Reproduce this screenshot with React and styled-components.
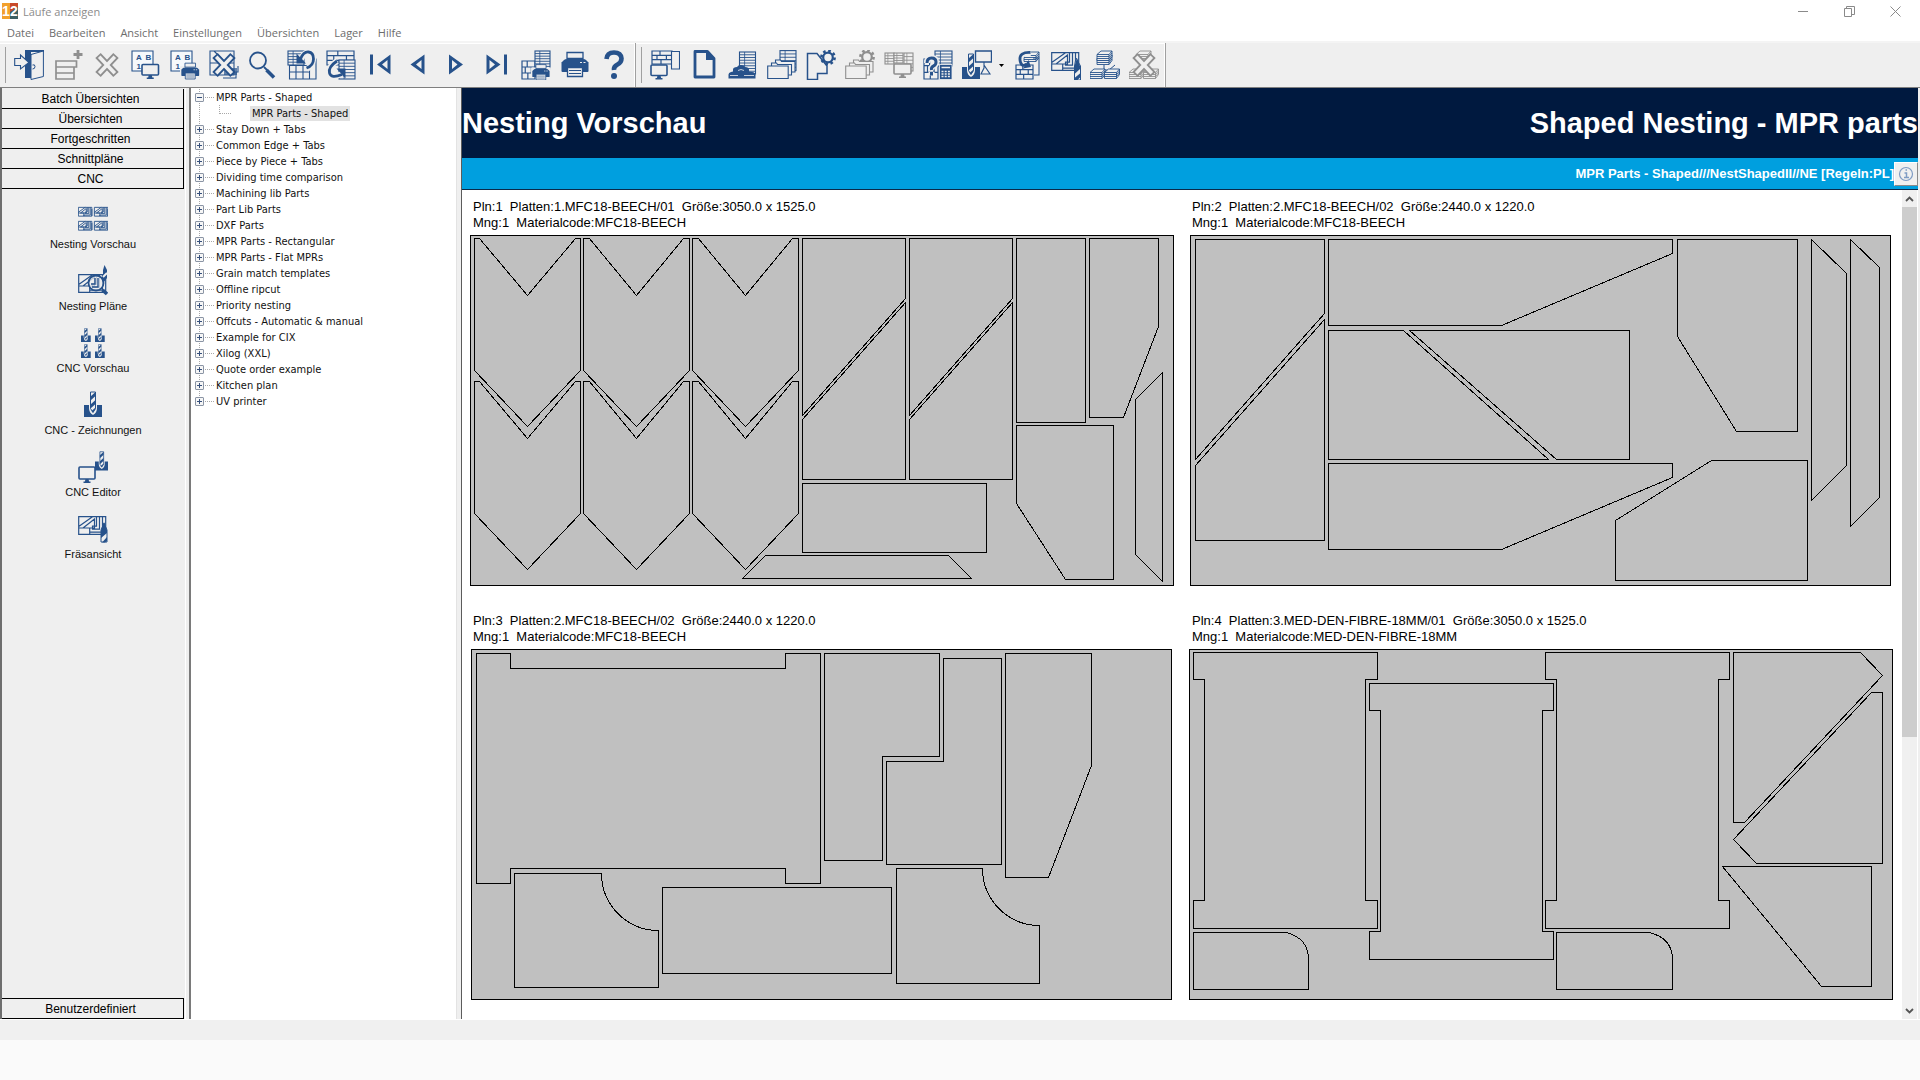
import React, { useState } from "react";
import styled, { createGlobalStyle, css } from "styled-components";

const BLUE = "#27528b";
const GREY = "#8f8f8f";
const FACE = "#efefef";
const SANS = '"Liberation Sans", Arial, sans-serif';
const UI = '"Open Sans", "Segoe UI", sans-serif';

const GlobalStyle = createGlobalStyle`
  *, *::before, *::after { box-sizing: border-box; }
  body { margin: 0; background: #fafafa; font-family: ${SANS}; color: #000; }
  button { font: inherit; color: inherit; border: 0; padding: 0; background: none; }
  ul { list-style: none; margin: 0; padding: 0; }
  h1, h2, p { margin: 0; font: inherit; }
`;

/* ---------- icon building blocks ---------- */

const Monitor = ({ x, y, w, h }) => (
  <g>
    <rect x={x} y={y} width={w} height={h} rx="1" fill={FACE} stroke="currentColor" strokeWidth="1.6" />
    <path d={`M${x + w / 2 - 1.5} ${y + h}h3l.6 2.5h1.4v1.4h-7v-1.4h1.4z`} fill="currentColor" />
  </g>
);

const Printer = ({ x, y, s = 1 }) => (
  <g transform={`translate(${x} ${y}) scale(${s})`}>
    <rect x="-1.5" y="7" width="31" height="14" fill={FACE} />
    <path d="M6 2.5h16v6H6z" fill={FACE} stroke="currentColor" strokeWidth="1.3" />
    <path d="M3 10q1-1 3-1h16q2 0 3 1l2.5 2.500v8.500q0 1-1 1h-25q-1 0-1-1v-8.500z" fill="currentColor" />
    <path d="M19 12.500h2m1.500 0h2" stroke={FACE} strokeWidth="1.2" />
    <path d="M6.500 17.500h15v9h-15z" fill={FACE} stroke="currentColor" strokeWidth="1.3" />
    <path d="M8 20.500h12M8 23.500h12" stroke="currentColor" strokeWidth="1" />
  </g>
);

const Drill = ({ x, y, s = 1 }) => (
  <g transform={`translate(${x} ${y}) scale(${s})`}>
    <path d="M0 14h5v3q0 5 4 7q4-2 4-7v-3h5v12H0z" fill="currentColor" />
    <path d="M6.500 1h5v16.500l-2.500 4l-2.500-4z" fill={FACE} stroke="currentColor" strokeWidth="1" />
    <path d="M6.500 5.500L11.500 1v4L6.500 9.500zM6.500 13.500l5-4.500v4l-5 4.500zM7.500 20l4-3.500v1.500l-2.500 3.500z" fill="currentColor" />
  </g>
);

const Nest = ({ x, y, s = 1, sw = 1.2 }) => (
  <g transform={`translate(${x} ${y}) scale(${s})`} fill="none" stroke="currentColor" strokeWidth={sw / s}>
    <path d="M.7 .7h27v17.600H.7zM.7 12h11M.7 10.500L14.500 .7M5 12L16.500 3v9zM18.500 .7v9.500h-4v3h7V.7M24.500 .7v15.500H11.700v2M27.700 4v14M11.700 12v6" />
  </g>
);

const AbSheet = () => (
  <g>
    <path d="M1 1h21v20H1z" fill="#f5f8fb" stroke="currentColor" strokeWidth="1.1" />
    <g fill="currentColor" fontFamily={SANS} fontWeight="700" fontSize="8">
      <text x="5" y="9.500">A</text>
      <text x="14.500" y="9.500">B</text>
      <text x="5.500" y="19">1</text>
    </g>
  </g>
);

const Cross = () => (
  <g fill="none" strokeLinejoin="miter">
    <path d="M6 5.500l18 19M24 5.500l-18 19" stroke="currentColor" strokeWidth="7.500" />
    <path d="M7.200 6.800l15.600 16.400M22.800 6.800l-15.600 16.400" stroke={FACE} strokeWidth="3.600" />
  </g>
);

const Page = ({ x, y, w, h, lines = 3 }) => (
  <g>
    <rect x={x} y={y} width={w} height={h} fill={FACE} stroke="currentColor" strokeWidth="1.1" />
    {Array.from({ length: lines }, (_, i) => (
      <path key={i} d={`M${x} ${y + ((i + 1) * h) / (lines + 1)}h${w}`} stroke="currentColor" strokeWidth=".9" />
    ))}
    <path d={`M${x + w * 0.32} ${y}v${h}`} stroke="currentColor" strokeWidth=".8" />
  </g>
);

const Bricks = ({ x, y, w, h }) => (
  <g transform={`translate(${x} ${y})`} fill="none" stroke="currentColor" strokeWidth="1.2">
    <path d={`M0 0h${w}v${h}H0zM0 ${h / 3}h${w}M0 ${(h * 2) / 3}h${w}M${w * 0.4} 0v${h / 3}M${w * 0.72} ${h / 3}v${h / 3}M${w * 0.25} ${h / 3}v${h / 3}M${w * 0.45} ${(h * 2) / 3}v${h / 3}`} />
  </g>
);

const Gear = ({ x, y }) => (
  <g transform={`translate(${x} ${y})`} fill="none" stroke="currentColor">
    <circle r="6.600" strokeWidth="2.600" strokeDasharray="2.600 2.580" />
    <circle r="4.800" strokeWidth="2.200" fill={FACE} />
  </g>
);

const Stack = ({ x, y }) => (
  <g transform={`translate(${x} ${y})`} fill={FACE} stroke="currentColor" strokeWidth=".9">
    <path d="M0 4.500L4 1h11v5.500L12 10.500H0z" />
    <path d="M0 4.500h12v6M12 4.500L15 1M0 6.500h12l3-3.500M0 8.500h12l3-3.500" fill="none" />
  </g>
);

const Cards = () => (
  <g fill={FACE} stroke="currentColor" strokeWidth="1.100">
    <path d="M8.500 10h5l1 1.500h13.500v10.500H8.500z" />
    <path d="M4.500 13h5l1 1.500h14v10.500h-20z" />
    <path d="M.700 16h20.500v12.500H.700z" />
  </g>
);

const icons = {
  exit: (
    <g>
      <path d="M11 0h19v2H17v26h-6z" fill="currentColor" />
      <path d="M17 4.500L29.400 1v25.500L17 29.500z" fill={FACE} stroke="currentColor" strokeWidth="1" />
      <path d="M18.500 15q2.500-1 2.500 1.500t-2.500 2.500" fill="none" stroke="currentColor" strokeWidth="1" />
      <path d="M.7 8.500h5.800V5l8.500 7.500L6.500 19v-3.500H.7z" fill={FACE} stroke="currentColor" strokeWidth="1.100" />
    </g>
  ),
  add: (
    <g fill="none" stroke="currentColor">
      <path d="M3 11h20.500v6H3zM3 17h18v6H3zM3 23h18v6H3z" strokeWidth="1.700" />
      <path d="M25 0v9M20.500 4.500h9" strokeWidth="2.800" />
    </g>
  ),
  cross: <Cross />,
  abMonitor: (<g><AbSheet /><Monitor x={11} y={14.500} w={16.500} h={10.500} /></g>),
  abPrinter: (<g><AbSheet /><Printer x={11} y={11.500} s={0.66} /></g>),
  crossDoc: (
    <g>
      <path d="M1 1h24v24H1zM14 28h13v-6h2v-6M5 1l20 20M1 13h24" fill="none" stroke="currentColor" strokeWidth="1.100" />
      <path d="M15 18h13v7H15z" fill="currentColor" opacity=".7" />
      <Cross />
    </g>
  ),
  search: (
    <g fill="none" stroke="currentColor">
      <circle cx="10" cy="10.500" r="8" strokeWidth="1.800" />
      <path d="M16 17l3 3" strokeWidth="1.800" />
      <path d="M18.500 20l7.500 7.500" strokeWidth="3.600" />
    </g>
  ),
  undoPlan: (
    <g fill="none" stroke="currentColor">
      <Page x={1} y={1} w={16} h={14} lines={4} />
      <path d="M2.500 15.500h20v13.500h-20zM2.500 22h20M9 15.500v13.500M16 15.500v13.500M23 9h6v20h-6" strokeWidth="1.100" />
      <path d="M14 9q3-7 8-6t4 7t-6 9" stroke={FACE} strokeWidth="6" />
      <path d="M13.500 9q3-7.500 8-7t5 7t-7 9" strokeWidth="2.800" />
      <path d="M9.500 3.500v10h9.500z" fill="currentColor" stroke="none" />
    </g>
  ),
  redoPlan: (
    <g fill="none" stroke="currentColor">
      <Bricks x={1} y={1} w={27} h={14} />
      <Page x={13} y={10} w={16} h={19} lines={5} />
      <path d="M11 11q-9 6-8 12t13 1" stroke={FACE} strokeWidth="6" />
      <path d="M11 11q-9 6-7.500 12t12.500 1.500" strokeWidth="2.800" />
      <path d="M10.500 18.500h9v10z" fill="currentColor" stroke="none" />
    </g>
  ),
  first: (<g fill="currentColor"><path d="M5 4.500h3v20H5z" /><path d="M25.500 4.500v20L12 14.500zM22.500 10l-5.500 4.500 5.500 4.500z" fillRule="evenodd" /></g>),
  prev: <path d="M20.500 4.500v20L6.500 14.500zM17.500 10l-5.500 4.500 5.500 4.500z" fill="currentColor" fillRule="evenodd" />,
  next: <path d="M6 4.500v20l14-10zM9 10l5.500 4.500L9 19z" fill="currentColor" fillRule="evenodd" />,
  last: (<g fill="currentColor"><path d="M22 4.500h3v20h-3z" /><path d="M4.500 4.500v20l14-10zM7.500 10l5.500 4.500L7.500 19z" fillRule="evenodd" /></g>),
  planPrinter: (
    <g><Bricks x={1} y={11} w={13} h={18} /><Page x={14} y={1} w={15} h={18} lines={6} /><Printer x={11} y={13} s={0.64} /></g>
  ),
  printer: <Printer x={1} y={0} />,
  help: (
    <g>
      <path d="M7.500 9q.500-6.500 7.500-6.500t7.500 6q0 4-4 6t-3.500 5.500" fill="none" stroke="currentColor" strokeWidth="4.600" />
      <circle cx="15" cy="26" r="3" fill="currentColor" />
    </g>
  ),
  bricksMonitor: (
    <g><Bricks x={2} y={1} w={20} h={13} /><path d="M21.500 1.500h8V19h-8z" fill={FACE} stroke="currentColor" strokeWidth="1.100" /><Monitor x={1} y={15} w={16} h={10.500} /></g>
  ),
  newPage: (
    <g>
      <path d="M6 1.500h12.500l6.500 7V27H6z" fill={FACE} stroke="currentColor" strokeWidth="2.800" strokeLinejoin="round" />
      <path d="M17 1l9 9h-9z" fill="currentColor" />
    </g>
  ),
  pressPage: (
    <g>
      <Page x={11.500} y={2} w={16} h={22} lines={7} />
      <path d="M.5 28.500v-4q0-2 2.500-2.500l2-.5v-2q0-2.500 4-2.500q1-2 4-2t4 2q4 0 4 2.500v2l3 .5q3.500 .5 3.500 2.500v4z" fill="currentColor" />
      <path d="M10 20.500q3-2 6 0M2 25.500h8m6 0h10" stroke={FACE} strokeWidth=".8" fill="none" />
    </g>
  ),
  cards: (<g><Page x={13} y={.6} w={16} h={20} lines={5} /><Cards /></g>),
  shapeGear: (
    <g>
      <path d="M1.500 3.500h9.500l10 12.500v7.500h-9.500v6h-10z" fill={FACE} stroke="currentColor" strokeWidth="1.500" />
      <Gear x={22} y={7.500} />
    </g>
  ),
  cardsGear: (<g><Gear x={22} y={7} /><Cards /></g>),
  screens: (
    <g><Page x={1} y={3} w={9} h={11} lines={3} /><Page x={20} y={3} w={9} h={18} lines={4} /><Page x={10} y={3} w={9} h={10} lines={3} /><Monitor x={10} y={14} w={17} h={10} /></g>
  ),
  calc: (
    <g>
      <Bricks x={1} y={9} w={14} h={20} />
      <Page x={12} y={1} w={17} h={15} lines={4} />
      <path d="M4 13q0-5 4.500-5t4.500 4q0 3-2.500 4T8.500 20M8.500 22v3.500" fill="none" stroke={FACE} strokeWidth="6" />
      <path d="M4 13q0-5 4.500-5t4.500 4q0 3-2.500 4T8.500 20M8.500 22v3.500" fill="none" stroke="currentColor" strokeWidth="3" />
      <path d="M16.500 14.500H29V29.500H16.500z" fill="currentColor" stroke={FACE} strokeWidth=".8" />
      <path d="M18.500 17.500h8.500M18.500 21.500h2m1.200 0h2m1.200 0h2M18.500 24h2m1.200 0h2m1.200 0h2M18.500 26.500h2m1.200 0h2m1.200 0h2" stroke={FACE} strokeWidth="1.400" />
    </g>
  ),
  drillMonitor: (
    <g>
      <Drill x={0} y={3} s={1} />
      <path d="M13.500 1h16v11h-16z" fill={FACE} stroke="currentColor" strokeWidth="1.400" />
      <path d="M22 12v3l6 9h-9l3-6z" fill={FACE} stroke="currentColor" strokeWidth="1.100" />
    </g>
  ),
  stackReload: (
    <g>
      <Stack x={12} y={1} />
      <path d="M21 8h6v17h-5" fill="none" stroke="currentColor" strokeWidth="1.100" />
      <Bricks x={4} y={15} w={17} h={14} />
      <path d="M19 3q-12-1-11 8" fill="none" stroke={FACE} strokeWidth="6" />
      <path d="M18.500 2.500Q7 2 8 10t7 4" fill="none" stroke="currentColor" strokeWidth="2.800" />
      <path d="M11 18.500l8-1.500-2.500-7z" fill="currentColor" />
    </g>
  ),
  nestMill: (
    <g>
      <Nest x={0} y={2} />
      <path d="M25 8l4.500 8v14h-6V16z" fill={FACE} stroke="currentColor" strokeWidth="1" />
      <path d="M26 8l3 8v3l-5.500 5v-8zM29.500 23v4l-3 3h-3v-2z" fill="currentColor" />
    </g>
  ),
  stacks: (
    <g><Stack x={7} y={4} /><Stack x={7} y={0} /><path d="M14 15v5M9 20h10l6-5" stroke="currentColor" fill="none" /><Stack x={0} y={18} /><Stack x={14.500} y={18} /></g>
  ),
  stacksCross: (<g><Stack x={7} y={0} /><Stack x={0} y={18} /><Stack x={14.500} y={18} /><Cross /></g>),

  nestPreview: (
    <g>
      {[[0, 4], [16, 4], [0, 18], [16, 18]].map(([x, y]) => <Nest key={x + "-" + y} x={x} y={y} s={0.5} sw={0.9} />)}
    </g>
  ),
  nestPlans: (
    <g>
      <Nest x={0} y={9} />
      <circle cx="18" cy="18" r="7.500" fill={FACE} fillOpacity=".75" stroke="currentColor" strokeWidth="1.800" />
      <path d="M17 13v6h-4M20 13v9h-6" fill="none" stroke="currentColor" strokeWidth="1.400" />
      <path d="M24.500 25l4.500 4" stroke="currentColor" strokeWidth="3.600" />
      <path d="M26.500 0l2.500 5v8l-4 5V5z" fill="currentColor" />
      <path d="M25 12l4-4" stroke={FACE} strokeWidth="2" />
    </g>
  ),
  cncPreview: (
    <g>
      {[[3, 1], [17, 1], [3, 17], [17, 17]].map(([x, y]) => <Drill key={x + "-" + y} x={x} y={y} s={0.54} />)}
    </g>
  ),
  cncDrawings: <Drill x={6} y={2} s={1} />,
  cncEditor: (<g><Drill x={17} y={0} s={0.75} /><Monitor x={1} y={16} w={16} h={12} /></g>),
  millView: (
    <g>
      <Nest x={0} y={3} />
      <path d="M26 10l3 7v12h-6V17z" fill={FACE} stroke="currentColor" strokeWidth="1" />
      <path d="M26 9l3 8v3l-6 5v-8zM29 24v4l-2 1.500h-3z" fill="currentColor" />
    </g>
  ),
};

const IconSvg = styled.svg`
  display: block;
  flex: none;
`;
const Icon = ({ name, height = 30 }) => (
  <IconSvg width="30" height={height} viewBox={`0 0 30 ${height}`} aria-hidden="true">{icons[name]}</IconSvg>
);

/* ---------- window chrome ---------- */

const Window = styled.div`
  min-height: 100vh;
  display: flex;
  flex-direction: column;
`;

const TitleBar = styled.header`
  display: flex;
  align-items: center;
  height: 22px;
  padding: 0 2px;
  background: #fff;
`;
const AppTitle = styled.h1`
  flex: 1;
  padding-left: 5px;
  font-family: ${UI};
  font-size: 11px;
  color: #8c8c8c;
`;
const WindowButton = styled.button`
  width: 46px;
  height: 20px;
  display: grid;
  place-items: center;
  color: #8a8a8a;
`;

const MenuBar = styled.nav`
  display: flex;
  height: 21px;
  background: linear-gradient(#fff 19px, #f4f4f4 19px);
`;
const MenuItem = styled.button`
  height: 20px;
  padding: 0 8px 0 7px;
  font-family: ${UI};
  font-size: 11px;
  color: #6d6d6d;
`;

const ToolBars = styled.div`
  display: flex;
  height: 44px;
  background: ${FACE};
`;
const ToolBar = styled.div`
  display: flex;
  align-items: center;
  padding: 0 2px 0 9px;
  border-right: 1px solid #a0a0a0;
  box-shadow: inset 0 1px #fff, inset -1px 0 #fff;
  background: linear-gradient(#a0a0a0, #a0a0a0) 5px 4px / 1px 36px no-repeat;
`;
const Tool = styled.button`
  width: 39px;
  height: 44px;
  display: grid;
  place-items: center;
  color: ${(p) => (p.$off ? GREY : BLUE)};
`;
const ToolMore = styled.button`
  width: 11px;
  height: 44px;
  display: grid;
  place-items: center;
`;

const Body = styled.main`
  flex: 1;
  display: grid;
  grid-template-columns: 189px 273px minmax(0, 1fr) 2px;
  background: ${FACE};
  border-top: 1px solid #7f7f7f;
`;

/* ---------- left sidebar ---------- */

const Sidebar = styled.nav`
  display: flex;
  flex-direction: column;
  margin-right: 3px;
  border-left: 2px solid #6e6e6e;
  border-right: 1px solid #fff;
  padding: 1px 1px 0 0;
`;
const SideTab = styled.button`
  height: 20px;
  padding-right: 4px;
  font-size: 12px;
  line-height: 20px;
  text-align: center;
  border-right: 1px solid #000;
  border-bottom: 1px solid #000;
  ${(p) => p.$bottom && css`
    margin-top: auto;
    border-top: 1px solid #000;
    height: 21px;
  `}
`;
const SideItems = styled.ul`
  padding-top: 14px;
`;
const SideItem = styled.button`
  width: 100%;
  height: 62px;
  display: flex;
  flex-direction: column;
  align-items: center;
  gap: 1px;
  font-size: 11px;
  line-height: 16px;
  color: #111;
  svg { color: ${BLUE}; }
`;

/* ---------- tree ---------- */

const TreePane = styled.div`
  background: #fff;
  border-left: 2px solid #7a7a7a;
  margin-right: 5px;
  border-right: 1px solid #e3e3e3;
  padding-left: 4px;
`;
const TreeList = styled.ul`
  padding-top: 1px;
  font-family: "DejaVu Sans Condensed", Tahoma, sans-serif;
  font-size: 11px;
  line-height: 16px;
  color: #111;
`;
const TreeRow = styled.div`
  display: flex;
  align-items: center;
  height: 16px;
  background:
    repeating-linear-gradient(#a8a8a8 0 1px, transparent 1px 2px) 4px 0 / 1px ${(p) => (p.$last ? "8px" : "16px")} no-repeat;
`;
const Expander = styled.button`
  width: 9px;
  height: 9px;
  border: 1px solid #8b95a5;
  border-radius: 1px;
  background:
    linear-gradient(#36507c, #36507c) center / 5px 1px no-repeat,
    linear-gradient(#36507c, #36507c) center / 1px ${(p) => (p.$open ? 1 : 5)}px no-repeat,
    #f6f6f6;
`;
const Branch = styled.span`
  width: 10px;
  height: 1px;
  margin: 0 1px;
  background: repeating-linear-gradient(90deg, #a8a8a8 0 1px, transparent 1px 2px);
`;
const LeafBranch = styled.span`
  align-self: flex-start;
  width: 12px;
  height: 9px;
  margin: 0 19px 0 24px;
  border-left: 1px dotted #a8a8a8;
  border-bottom: 1px dotted #a8a8a8;
`;
const TreeLabel = styled.button`
  height: 15px;
  line-height: 15px;
  white-space: nowrap;
  ${(p) => p.$selected && css`
    padding: 0 2px;
    background: #e2e2e2;
  `}
`;

/* ---------- preview pane ---------- */

const Preview = styled.section`
  display: flex;
  flex-direction: column;
  background: #fff;
  box-shadow: -1px 0 #5c5c5c;
`;
const Banner = styled.header`
  display: flex;
  justify-content: space-between;
  align-items: center;
  height: 70px;
  padding-top: 1px;
  background: #00193f;
  color: #fff;
  font-size: 29px;
  font-weight: 700;
`;
const SubBanner = styled.div`
  display: flex;
  justify-content: flex-end;
  align-items: center;
  height: 32px;
  background: #009fdf;
  border-bottom: 1px solid #0a2a4a;
  color: #fff;
  font-size: 13px;
  font-weight: 700;
`;
const InfoButton = styled.button`
  width: 24px;
  height: 24px;
  display: grid;
  place-items: center;
  background: #f0f0f0;
  border: 1px solid #fff;
  border-right-color: #8a8a8a;
  border-bottom-color: #8a8a8a;
`;
const Scroller = styled.div`
  flex: 1;
  display: grid;
  grid-template-columns: minmax(0, 1fr) 15px;
  padding-right: 1px;
`;
const Sheets = styled.div`
  display: grid;
  grid-template-columns: repeat(2, minmax(0, 1fr));
  align-content: start;
  gap: 27px 6px;
  padding: 9px 0 18px 8px;
`;
const Sheet = styled.figure`
  margin: 0;
  min-width: 0;
`;
const SheetLabel = styled.figcaption`
  height: 36px;
  padding-left: 3px;
  font-size: 13px;
  line-height: 16px;
  white-space: pre;
`;
const SheetSvg = styled.svg`
  display: block;
  max-width: 100%;
  height: auto;
  fill: #c0c0c0;
  stroke: #000;
  stroke-width: 1;
  shape-rendering: crispEdges;
`;
const ScrollBar = styled.div`
  display: flex;
  flex-direction: column;
  background: #f0f0f0;
`;
const ScrollArrow = styled.button`
  height: 17px;
  display: grid;
  place-items: center;
`;
const ScrollTrack = styled.div`
  flex: 1;
`;
const ScrollThumb = styled.div`
  height: calc(100% * 2 / 3);
  background: #cdcdcd;
`;

const StatusBar = styled.footer`
  height: 21px;
  background: #f0f0f0;
  border-top: 1px solid #fff;
`;
const Desktop = styled.div`
  height: 40px;
  background: #fafafa;
`;

/* ---------- data ---------- */

const menus = ["Datei", "Bearbeiten", "Ansicht", "Einstellungen", "Übersichten", "Lager", "Hilfe"];

const mainTools = [
  ["exit", "Beenden"], ["add", "Hinzufügen", true], ["cross", "Löschen", true], ["abMonitor", "Etiketten anzeigen"],
  ["abPrinter", "Etiketten drucken"], ["crossDoc", "Liste löschen"], ["search", "Suchen"], ["undoPlan", "Plan zurück"],
  ["redoPlan", "Plan aktualisieren"], ["first", "Erster"], ["prev", "Vorheriger"], ["next", "Nächster"],
  ["last", "Letzter"], ["planPrinter", "Plan drucken"], ["printer", "Drucken"], ["help", "Hilfe"],
];
const planTools = [
  ["bricksMonitor", "Pläne anzeigen"], ["newPage", "Neu"], ["pressPage", "Maschine"], ["cards", "Läufe"],
  ["shapeGear", "Teil bearbeiten"], ["cardsGear", "Läufe bearbeiten", true], ["screens", "Simulation", true],
  ["calc", "Kalkulation"], ["drillMonitor", "CNC anzeigen"],
];
const stockTools = [
  ["stackReload", "Stapel laden"], ["nestMill", "Nesting fräsen"], ["stacks", "Stapel"], ["stacksCross", "Stapel löschen", true],
];

const sideTabs = ["Batch Übersichten", "Übersichten", "Fortgeschritten", "Schnittpläne", "CNC"];
const sideItems = [
  ["nestPreview", "Nesting Vorschau"], ["nestPlans", "Nesting Pläne"], ["cncPreview", "CNC Vorschau"],
  ["cncDrawings", "CNC - Zeichnungen"], ["cncEditor", "CNC Editor"], ["millView", "Fräsansicht"],
];

const tree = [
  { name: "MPR Parts - Shaped", children: ["MPR Parts - Shaped"] },
  ...[
    "Stay Down + Tabs", "Common Edge + Tabs", "Piece by Piece + Tabs", "Dividing time comparison", "Machining lib Parts",
    "Part Lib Parts", "DXF Parts", "MPR Parts - Rectangular", "MPR Parts - Flat MPRs", "Grain match templates",
    "Offline ripcut", "Priority nesting", "Offcuts - Automatic & manual", "Example for CIX", "Xilog (XXL)",
    "Quote order example", "Kitchen plan", "UV printer",
  ].map((name) => ({ name, children: [] })),
];

const arrow = (l, a, m, b, r, y) =>
  `M${l} ${3 + y}H${a}L${m} ${60 + y}L${b} ${3 + y}H${r}V${135 + y}L${m} ${191 + y}L${l} ${135 + y}z`;
const arrows = (y) => [arrow(4, 9, 57, 105, 110, y), arrow(113, 119, 166, 213, 219, y), arrow(222, 228, 275, 322, 328, y)];

const sheets = [
  {
    label: ["Pln:1  Platten:1.MFC18-BEECH/01  Größe:3050.0 x 1525.0", "Mng:1  Materialcode:MFC18-BEECH"],
    x: 0, width: 704,
    parts: [
      ...arrows(0), ...arrows(143),
      "M332 3H435V63L332 180z", "M435 67V244H332V184z",
      "M439 3H542V63L439 180z", "M542 67V244H439V184z",
      "M332 248H516V317H332z", "M295 320H478L501 343H272z",
      "M546 3H615V187H546z", "M619 3H688V91L653 182H619z",
      "M546 190H643V344H595L546 268z", "M692 137V346L665 319V164z",
    ],
  },
  {
    label: ["Pln:2  Platten:2.MFC18-BEECH/02  Größe:2440.0 x 1220.0", "Mng:1  Materialcode:MFC18-BEECH"],
    x: 1, width: 701,
    parts: [
      "M5 4H134V78L5 224z", "M134 84V305H5V230z",
      "M138 4H482V18L311 90H138z", "M138 95H213L358 224H138z", "M219 95H439V224H366z",
      "M138 228H482V242L311 314H138z", "M487 4H607V196H546L487 101z",
      "M621 4L656 38V230L621 265z", "M660 4L689 32V262L660 291z", "M425 285L521 225H617V345H425z",
    ],
  },
  {
    label: ["Pln:3  Platten:2.MFC18-BEECH/02  Größe:2440.0 x 1220.0", "Mng:1  Materialcode:MFC18-BEECH"],
    x: 1, width: 701,
    parts: [
      "M5 4H39V19H314V4H349V234H314V219H39V234H5z", "M353 4H468V107H411V211H353z",
      "M472 9H530V215H415V112H472z", "M534 4H620V116L577 228H534z",
      "M43 224H130A57 57 0 0 0 187 281V338H43z", "M191 238H420V324H191z",
      "M425 219H511A57 57 0 0 0 568 276V334H425z",
    ],
  },
  {
    label: ["Pln:4  Platten:3.MED-DEN-FIBRE-18MM/01  Größe:3050.0 x 1525.0", "Mng:1  Materialcode:MED-DEN-FIBRE-18MM"],
    x: 0, width: 704,
    parts: [
      "M4 3H188V30H176V251H188V279H4V251H15V30H4z", "M180 34H364V61H353V282H364V310H180V282H191V61H180z",
      "M356 3H540V30H529V251H540V279H356V251H367V30H356z",
      "M544 3H671L693 26L555 173H544z", "M682 43H693V214H567L544 190z", "M533 217H682V337H632z",
      "M4 283H97Q119 289 119 310V340H4z", "M367 283H460Q483 289 483 310V340H367z",
    ],
  },
];

function ToolButtons({ items }) {
  return items.map(([icon, label, off]) => (
    <Tool key={icon} type="button" aria-label={label} $off={off}>
      <Icon name={icon} />
    </Tool>
  ));
}

function Tree() {
  const [open, setOpen] = useState({ 0: true });
  return (
    <TreeList>
      {tree.map((node, i) => (
        <li key={node.name}>
          <TreeRow $last={i === tree.length - 1}>
            <Expander
              type="button"
              aria-label={node.name}
              aria-expanded={!!open[i]}
              $open={open[i]}
              onClick={() => setOpen({ ...open, [i]: !open[i] })}
            />
            <Branch />
            <TreeLabel type="button">{node.name}</TreeLabel>
          </TreeRow>
          {open[i] && node.children.length > 0 && (
            <ul>
              {node.children.map((child) => (
                <li key={child}>
                  <TreeRow>
                    <LeafBranch />
                    <TreeLabel type="button" $selected>{child}</TreeLabel>
                  </TreeRow>
                </li>
              ))}
            </ul>
          )}
        </li>
      ))}
    </TreeList>
  );
}

export default function App() {
  return (
    <Window>
      <GlobalStyle />
      <TitleBar>
        <svg width="16" height="16" viewBox="0 0 16 16" aria-hidden="true">
          <path d="M0 0h8v16H0z" fill="#f2a02c" />
          <path d="M8 0h8v16H8z" fill="#c94a2a" />
          <path d="M8 9l8-5v12H8z" fill="#3c5f63" />
          <g fill="#fff" fontFamily={SANS} fontWeight="700" fontSize="14">
            <text x="0" y="13">1</text>
            <text x="8" y="13">2</text>
          </g>
        </svg>
        <AppTitle>Läufe anzeigen</AppTitle>
        <WindowButton type="button" aria-label="Minimieren">
          <svg width="11" height="11"><path d="M0 5.500h10" stroke="currentColor" /></svg>
        </WindowButton>
        <WindowButton type="button" aria-label="Wiederherstellen">
          <svg width="11" height="11" fill="none" stroke="currentColor"><path d="M.5 2.500h7v8h-7zM2.500 2.500v-2h8v8h-3" /></svg>
        </WindowButton>
        <WindowButton type="button" aria-label="Schließen">
          <svg width="11" height="11" stroke="currentColor"><path d="M.5 .5l10 10M10.500 .5l-10 10" /></svg>
        </WindowButton>
      </TitleBar>
      <MenuBar>
        {menus.map((m) => <MenuItem key={m} type="button">{m}</MenuItem>)}
      </MenuBar>
      <ToolBars>
        <ToolBar>
          <ToolButtons items={mainTools} />
        </ToolBar>
        <ToolBar>
          <ToolButtons items={planTools} />
          <ToolMore type="button" aria-label="Mehr">
            <svg width="5" height="3" aria-hidden="true"><path d="M0 0h5L2.500 3z" /></svg>
          </ToolMore>
          <ToolButtons items={stockTools} />
        </ToolBar>
      </ToolBars>
      <Body>
        <Sidebar>
          {sideTabs.map((t) => <SideTab key={t} type="button">{t}</SideTab>)}
          <SideItems>
            {sideItems.map(([icon, label]) => (
              <li key={icon}>
                <SideItem type="button">
                  <Icon name={icon} height={32} />
                  {label}
                </SideItem>
              </li>
            ))}
          </SideItems>
          <SideTab type="button" $bottom>Benutzerdefiniert</SideTab>
        </Sidebar>
        <TreePane>
          <Tree />
        </TreePane>
        <Preview>
          <Banner>
            <h2>Nesting Vorschau</h2>
            <p>Shaped Nesting - MPR parts</p>
          </Banner>
          <SubBanner>
            <p>MPR Parts - Shaped///NestShapedII//NE [Regeln:PL]</p>
            <InfoButton type="button" aria-label="Info">
              <svg width="16" height="16" fill="none" stroke="#7f9cc4" aria-hidden="true">
                <circle cx="8" cy="8" r="6.500" strokeWidth="1.200" />
                <path d="M6.500 7H8.500v4.500M6 11.500h5M7.500 4h1.500" strokeWidth="1.500" />
              </svg>
            </InfoButton>
          </SubBanner>
          <Scroller>
            <Sheets>
              {sheets.map((s) => (
                <Sheet key={s.label[0]}>
                  <SheetLabel>{s.label.join("\n")}</SheetLabel>
                  <SheetSvg width="704" height="351" viewBox="0 0 704 351" role="img" aria-label={s.label[0]}>
                    <g transform={`translate(${s.x + 0.5} 0.5)`}>
                      <path d={`M0 0H${s.width - 1}V350H0z`} />
                      {s.parts.map((d) => <path key={d} d={d} />)}
                    </g>
                  </SheetSvg>
                </Sheet>
              ))}
            </Sheets>
            <ScrollBar>
              <ScrollArrow type="button" aria-label="Nach oben">
                <svg width="9" height="6" fill="none" stroke="#555" strokeWidth="1.800" aria-hidden="true"><path d="M1 5l3.500-3.500L8 5" /></svg>
              </ScrollArrow>
              <ScrollTrack>
                <ScrollThumb />
              </ScrollTrack>
              <ScrollArrow type="button" aria-label="Nach unten">
                <svg width="9" height="6" fill="none" stroke="#555" strokeWidth="1.800" aria-hidden="true"><path d="M1 1l3.500 3.500L8 1" /></svg>
              </ScrollArrow>
            </ScrollBar>
          </Scroller>
        </Preview>
      </Body>
      <StatusBar />
      <Desktop />
    </Window>
  );
}
